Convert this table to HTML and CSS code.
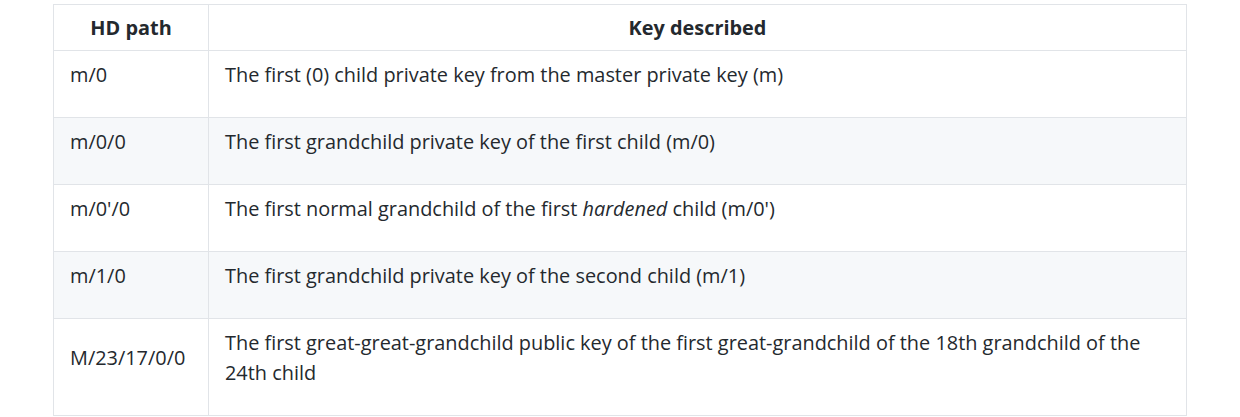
FILE: index.html
```html
<!DOCTYPE html>
<html lang="en">
<head>
<meta charset="utf-8">
<title>HD wallet path examples</title>
<link rel="stylesheet" href="styles.css">
</head>
<body>
<div class="page">
  <p class="caption">Table 4-9. HD wallet path examples</p>
  <table class="paths">
    <thead>
      <tr><th class="col-path">HD path</th><th>Key described</th></tr>
    </thead>
    <tbody>
      <tr><td><p>m/0</p></td><td><p>The first (0) child private key from the master private key (m)</p></td></tr>
      <tr><td><p>m/0/0</p></td><td><p>The first grandchild private key of the first child (m/0)</p></td></tr>
      <tr><td><p>m/0'/0</p></td><td><p>The first normal grandchild of the first <em>hardened</em> child (m/0')</p></td></tr>
      <tr><td><p>m/1/0</p></td><td><p>The first grandchild private key of the second child (m/1)</p></td></tr>
      <tr><td><p>M/23/17/0/0</p></td><td><p>The first great-great-grandchild public key of the first great-grandchild of the 18th grandchild of the 24th child</p></td></tr>
    </tbody>
  </table>
</div>
</body>
</html>
```

FILE: styles.css
```css
html, body {
  margin: 0;
  padding: 0;
  background: #ffffff;
}

.page {
  padding: 0 53px;
  font-family: "Open Sans", "Noto Sans", sans-serif;
  font-size: 19.9px;
  color: #24292e;
}

.caption {
  margin: -28px 0 0 -22px;
  height: 32px;
  line-height: 30px;
  white-space: nowrap;
}

.paths {
  width: 1134px;
  border-collapse: collapse;
  line-height: 30px;
}

.paths th,
.paths td {
  border: 1px solid #e1e4e8;
  padding: 9px 16px;
  vertical-align: middle;
  text-align: left;
}

.paths th {
  text-align: center;
  font-weight: 700;
  padding: 8px 16px 7px;
}

.paths .col-path {
  width: 122px;
}

.paths td p {
  margin: 0 0 18px 0;
}

.paths tbody tr:nth-child(even) {
  background: #f6f8fa;
}
```
